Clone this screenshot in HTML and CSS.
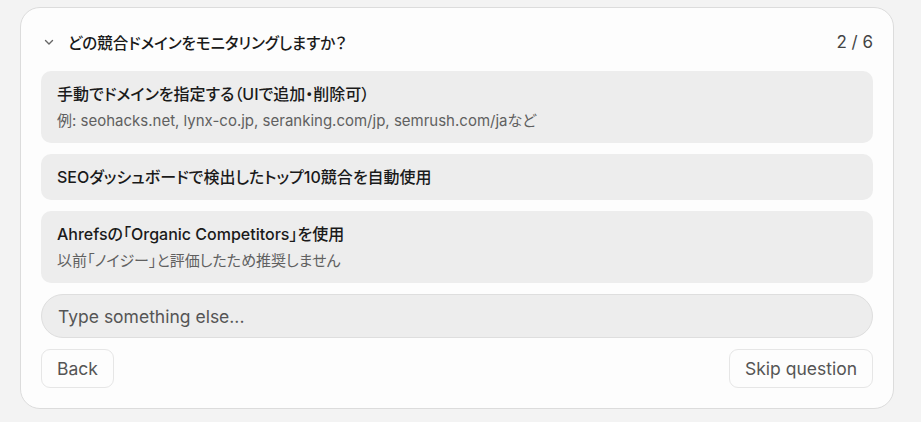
FILE: index.html
```html
<!DOCTYPE html>
<html lang="ja">
<head>
    <meta charset="UTF-8">
    <meta name="viewport" content="width=device-width, initial-scale=1.0">
    <title>競合ドメイン</title>
    <link rel="stylesheet" href="styles.css">
</head>
<body>
<div class="card">
    <div class="card-header">
        <div class="question">
            <svg class="chevron" width="16" height="16" viewBox="0 0 16 16" fill="none">
                <path d="M4.5 6.5 L8 10 L11.5 6.5" stroke="#666" stroke-width="1.4" stroke-linecap="round" stroke-linejoin="round"/>
            </svg>
            <span class="question-text">どの競合ドメインをモニタリングしますか？</span>
        </div>
        <span class="counter">2 / 6</span>
    </div>

    <div class="options">
        <div class="option">
            <div class="option-title">手動でドメインを指定する（UIで追加・削除可）</div>
            <div class="option-desc">例: seohacks.net, lynx-co.jp, seranking.com/jp, semrush.com/jaなど</div>
        </div>
        <div class="option">
            <div class="option-title">SEOダッシュボードで検出したトップ10競合を自動使用</div>
        </div>
        <div class="option">
            <div class="option-title">Ahrefsの「Organic Competitors」を使用</div>
            <div class="option-desc">以前「ノイジー」と評価したため推奨しません</div>
        </div>
        <input class="other-input" type="text" placeholder="Type something else...">
        <div class="actions">
            <button class="btn">Back</button>
            <button class="btn">Skip question</button>
        </div>
    </div>
</div>
</body>
</html>
```

FILE: styles.css
```css
body {
    margin: 0;
    padding: 7px 27px 13px 20px;
    background: #f3f3f3;
    font-family: Inter, "Noto Sans CJK JP", sans-serif;
    font-feature-settings: "palt";
    color: #1f1f1f;
}
.card {
    background: #fdfdfd;
    border: 1px solid #dcdcdc;
    border-radius: 20px;
    padding: 20px;
}
.card-header {
    display: flex;
    justify-content: space-between;
    align-items: center;
    height: 28px;
    margin-bottom: 15px;
}
.question {
    display: flex;
    align-items: center;
    gap: 11px;
}
.question-text {
    font-size: 15.5px;
    font-weight: 500;
    color: #1a1a1a;
}
.counter {
    font-size: 17px;
    color: #444;
}
.options {
    display: flex;
    flex-direction: column;
    gap: 11px;
}
.option {
    background: #ededed;
    border-radius: 10px;
    padding: 12px 16px;
}
.option-title {
    font-size: 16px;
    font-weight: 500;
    line-height: 22px;
    color: #1a1a1a;
}
.option-desc {
    margin-top: 6px;
    font-size: 15px;
    line-height: 20px;
    color: #606060;
}
.other-input {
    height: 44px;
    box-sizing: border-box;
    border: 1px solid #dedede;
    border-radius: 22px;
    background: #ededed;
    padding: 0 16px;
    font-family: inherit;
    font-size: 17.5px;
    color: #333;
    outline: none;
}
.other-input::placeholder {
    color: #555;
}
.actions {
    display: flex;
    justify-content: space-between;
}
.btn {
    height: 39px;
    padding: 0 15px;
    background: #fdfdfd;
    border: 1px solid #e6e6e6;
    border-radius: 9px;
    font-family: inherit;
    font-size: 17.5px;
    color: #555;
    cursor: pointer;
}
```
